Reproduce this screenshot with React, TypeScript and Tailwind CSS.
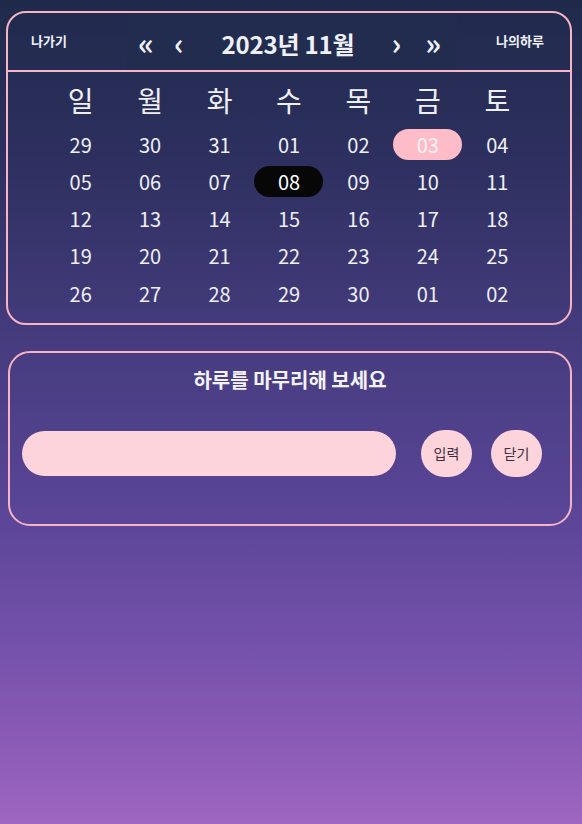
import React from "react";

const days = ["일", "월", "화", "수", "목", "금", "토"];
const weeks = [
  ["29", "30", "31", "01", "02", "03", "04"],
  ["05", "06", "07", "08", "09", "10", "11"],
  ["12", "13", "14", "15", "16", "17", "18"],
  ["19", "20", "21", "22", "23", "24", "25"],
  ["26", "27", "28", "29", "30", "01", "02"],
];

export default function App() {
  return (
    <div
      className="w-[582px] h-[824px] overflow-hidden bg-[linear-gradient(180deg,#1f2a4b_0%,#2e3060_20%,#463c7f_42%,#5a4597_62%,#7451ab_78%,#8a5bb6_90%,#9e66c1_100%)] pt-[11px]"
      style={{ fontFamily: '"Noto Sans CJK KR", "Noto Sans", sans-serif' }}
    >
      {/* Calendar card */}
      <div className="ml-[6px] w-[566px] rounded-[20px] border-2 border-[#f6b4c4] text-[#eef0f6]">
        <div className="h-[59px] border-b-2 border-[#f6b4c4] flex items-center relative">
          <div className="absolute left-[23px] top-[21px] text-[13px] font-bold leading-none">나가기</div>
          <div className="absolute left-[488px] top-[21px] text-[13px] font-bold leading-none">나의하루</div>
          <div className="absolute left-[119px] top-0 h-full w-[330px] bg-[#222c4f] flex items-center pt-[4px]">
            <span className="ml-[11px] text-[30px] leading-none font-bold mt-[-4px]">«</span>
            <span className="ml-[20px] text-[30px] leading-none font-bold mt-[-4px]">‹</span>
            <span className="ml-[38px] text-[24px] font-bold leading-none tracking-[-0.2px]">2023년 11월</span>
            <span className="ml-[37px] text-[30px] leading-none font-bold mt-[-4px]">›</span>
            <span className="ml-[24px] text-[30px] leading-none font-bold mt-[-4px]">»</span>
          </div>
        </div>
        <div className="mx-auto w-[486px] grid grid-cols-7 h-[54px] items-center">
          {days.map((d) => (
            <div key={d} className="text-center text-[28px] leading-none font-normal mt-[1px]">
              {d}
            </div>
          ))}
        </div>
        <div className="mx-auto w-[486px] pb-[11px]">
          {weeks.map((w, i) => (
            <div key={i} className="grid grid-cols-7 h-[37.25px] items-center">
              {w.map((d, j) => {
                const isToday = i === 0 && j === 5;
                const isSel = i === 1 && j === 3;
                return (
                  <div key={j} className="flex justify-center">
                    <div
                      className={
                        "w-[69px] h-[31px] rounded-full flex items-center justify-center text-[20px] leading-none " +
                        (isToday
                          ? "bg-[#fdbcc7] text-[#fff4f6]"
                          : isSel
                          ? "bg-[#070707] text-white"
                          : "")
                      }
                    >
                      {d}
                    </div>
                  </div>
                );
              })}
            </div>
          ))}
        </div>
      </div>

      {/* Diary card */}
      <div className="ml-[8px] mt-[26px] w-[564px] h-[175px] rounded-[22px] border-2 border-[#f6b4c4] flex flex-col">
        <div className="mt-[17px] text-center text-[20px] font-bold text-[#f2f2f8] leading-none">
          하루를 마무리해 보세요
        </div>
        <div className="mt-[40px] flex items-center">
          <div className="ml-[12px] w-[374px] h-[45px] rounded-full bg-[#fdd4dc]" />
          <div className="ml-[25px] w-[51px] h-[47px] rounded-full bg-[#fdd4dc] flex items-center justify-center text-[14px] text-[#3a2f3a]">
            입력
          </div>
          <div className="ml-[19px] w-[51px] h-[47px] rounded-full bg-[#fdd4dc] flex items-center justify-center text-[14px] text-[#3a2f3a]">
            닫기
          </div>
        </div>
      </div>
    </div>
  );
}
